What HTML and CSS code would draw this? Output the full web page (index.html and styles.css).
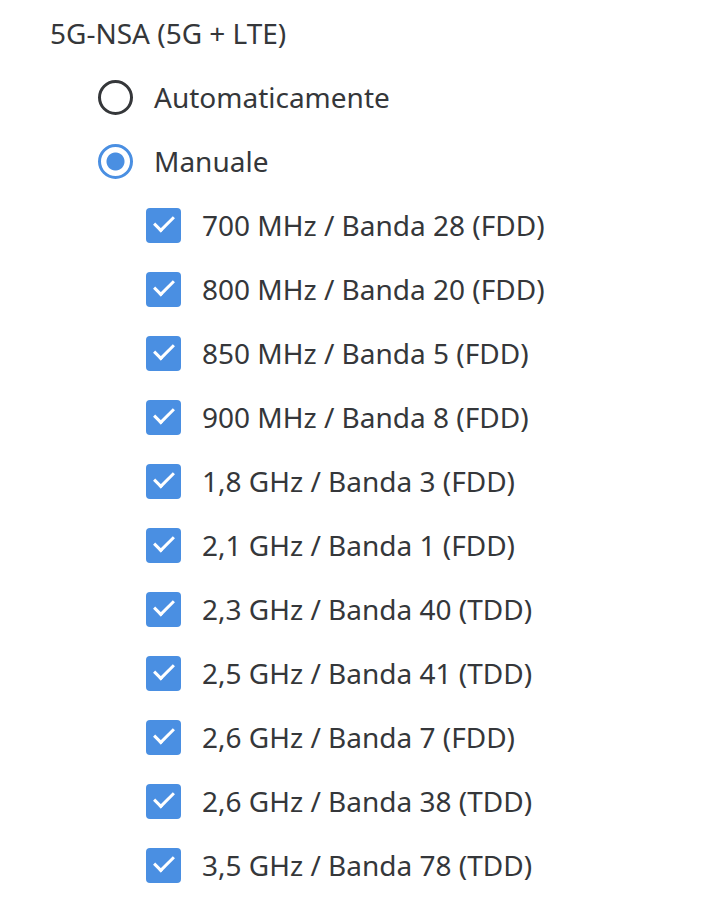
FILE: index.html
```html
<!DOCTYPE html>
<html>
<head>
<meta charset="UTF-8">
<title>Bande 5G-NSA</title>
<link rel="stylesheet" href="styles.css">
</head>
<body>
  <section class="band-group">
    <div class="group-title">5G-NSA (5G + LTE)</div>
    <ul class="modes">
      <li class="option">
        <span class="radio"></span>
        <span class="label">Automaticamente</span>
      </li>
      <li class="option">
        <span class="radio checked"></span>
        <span class="label">Manuale</span>
      </li>
    </ul>
    <ul class="bands">
      <li class="option"><span class="check"></span><span class="label">700 MHz / Banda 28 (FDD)</span></li>
      <li class="option"><span class="check"></span><span class="label">800 MHz / Banda 20 (FDD)</span></li>
      <li class="option"><span class="check"></span><span class="label">850 MHz / Banda 5 (FDD)</span></li>
      <li class="option"><span class="check"></span><span class="label">900 MHz / Banda 8 (FDD)</span></li>
      <li class="option"><span class="check"></span><span class="label">1,8 GHz / Banda 3 (FDD)</span></li>
      <li class="option"><span class="check"></span><span class="label">2,1 GHz / Banda 1 (FDD)</span></li>
      <li class="option"><span class="check"></span><span class="label">2,3 GHz / Banda 40 (TDD)</span></li>
      <li class="option"><span class="check"></span><span class="label">2,5 GHz / Banda 41 (TDD)</span></li>
      <li class="option"><span class="check"></span><span class="label">2,6 GHz / Banda 7 (FDD)</span></li>
      <li class="option"><span class="check"></span><span class="label">2,6 GHz / Banda 38 (TDD)</span></li>
      <li class="option"><span class="check"></span><span class="label">3,5 GHz / Banda 78 (TDD)</span></li>
    </ul>
  </section>
</body>
</html>
```

FILE: styles.css
```css
html, body {
  margin: 0;
  padding: 0;
  overflow: hidden;
}
body {
  background: #fff;
  color: #35373a;
  font-family: "Noto Sans", sans-serif;
  font-size: 28px;
}
.band-group {
  padding: 1px 0 0 50px;
}
.group-title {
  line-height: 64px;
}
ul {
  margin: 0;
  padding: 0;
  list-style: none;
}
.modes {
  padding-left: 48px;
}
.bands {
  padding-left: 96px;
}
.option {
  display: flex;
  align-items: center;
  gap: 21px;
  height: 64px;
}
/* radio buttons */
.radio {
  width: 35px;
  height: 35px;
  box-sizing: border-box;
  border: 3px solid #35373a;
  border-radius: 50%;
  flex: 0 0 auto;
}
.radio.checked {
  border-color: #4a8fe2;
  background: radial-gradient(circle, #4a8fe2 0 8.5px, #fff 9.5px);
}
/* checkboxes */
.check {
  width: 35px;
  height: 35px;
  border-radius: 4px;
  background: #4a8fe2;
  flex: 0 0 auto;
  position: relative;
}
.check::after {
  content: "";
  position: absolute;
  left: 8px;
  top: 8px;
  width: 17px;
  height: 8px;
  border-left: 3px solid #fff;
  border-bottom: 3px solid #fff;
  transform: rotate(-45deg);
}
```
